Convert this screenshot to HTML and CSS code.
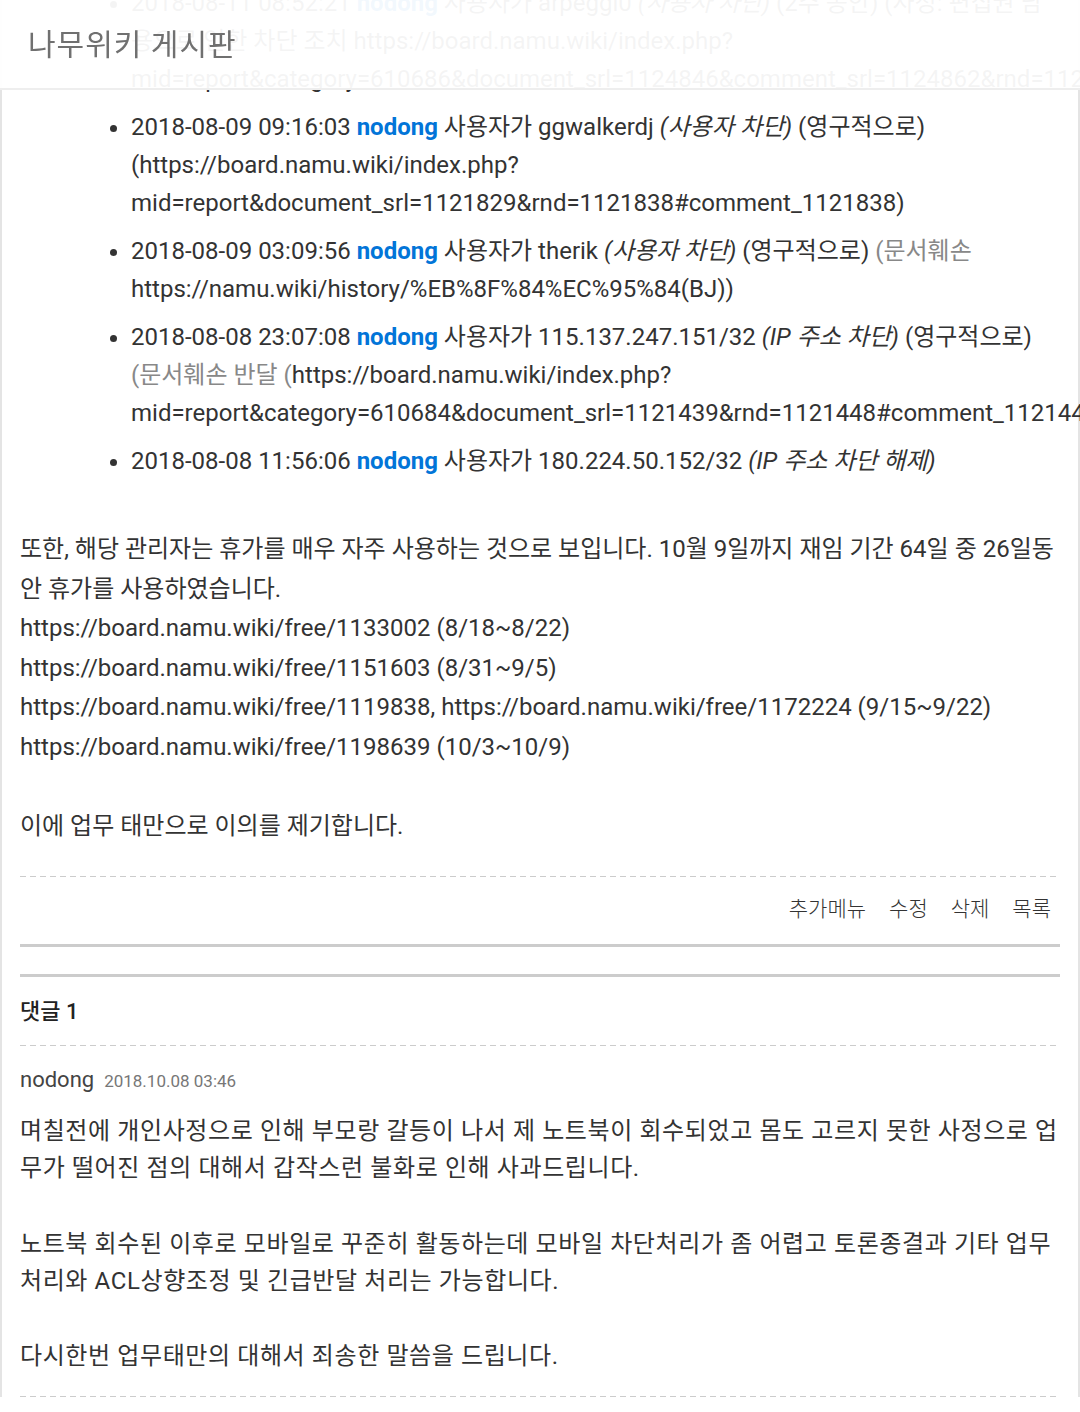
FILE: index.html
```html
<!DOCTYPE html>
<html lang="ko">
<head>
<meta charset="utf-8">
<title>나무위키 게시판</title>
<link rel="stylesheet" href="styles.css">
</head>
<body>
<header class="topbar">
  <h1 class="topbar-title">나무위키 게시판</h1>
</header>
<main class="board">
  <article class="post">
    <ul class="log">
      <li>2018-08-11 08:52:21 <span class="user">nodong</span> 사용자가 arpeggi0 <i>(사용자 차단)</i> (2주 동안) (사정: 편집권 남용으로 인한 차단 조치 https://board.namu.wiki/index.php?mid=report&amp;category=610686&amp;document_srl=1124846&amp;comment_srl=1124862&amp;rnd=1124862#comment_1124862)</li>
      <li>2018-08-09 09:16:03 <span class="user">nodong</span> 사용자가 ggwalkerdj <i>(사용자 차단)</i> (영구적으로) (https://board.namu.wiki/index.php?mid=report&amp;document_srl=1121829&amp;rnd=1121838#comment_1121838)</li>
      <li>2018-08-09 03:09:56 <span class="user">nodong</span> 사용자가 therik <i>(사용자 차단)</i> (영구적으로) <span class="reason">(문서훼손</span> https://namu.wiki/history/%EB%8F%84%EC%95%84(BJ))</li>
      <li>2018-08-08 23:07:08 <span class="user">nodong</span> 사용자가 115.137.247.151/32 <i>(IP 주소 차단)</i> (영구적으로) <span class="reason">(문서훼손 반달 (</span>https://board.namu.wiki/index.php?mid=report&amp;category=610684&amp;document_srl=1121439&amp;rnd=1121448#comment_1121448)</li>
      <li>2018-08-08 11:56:06 <span class="user">nodong</span> 사용자가 180.224.50.152/32 <i>(IP 주소 차단 해제)</i></li>
    </ul>
    <div class="post-text">
      <p>또한, 해당 관리자는 휴가를 매우 자주 사용하는 것으로 보입니다. 10월 9일까지 재임 기간 64일 중 26일동안 휴가를 사용하였습니다.<br>https://board.namu.wiki/free/1133002 (8/18~8/22)<br>https://board.namu.wiki/free/1151603 (8/31~9/5)<br>https://board.namu.wiki/free/1119838, https://board.namu.wiki/free/1172224 (9/15~9/22)<br>https://board.namu.wiki/free/1198639 (10/3~10/9)</p>
      <p>이에 업무 태만으로 이의를 제기합니다.</p>
    </div>
    <div class="dash"></div>
    <nav class="actions">
      <span class="action">추가메뉴</span>
      <span class="action">수정</span>
      <span class="action">삭제</span>
      <span class="action">목록</span>
    </nav>
  </article>
  <section class="comments">
    <h2 class="comments-title">댓글 1</h2>
    <div class="dash"></div>
    <div class="comment">
      <div class="comment-meta"><span class="comment-author">nodong</span><span class="comment-date">2018.10.08 03:46</span></div>
      <div class="comment-body">
        <p>며칠전에 개인사정으로 인해 부모랑 갈등이 나서 제 노트북이 회수되었고 몸도 고르지 못한 사정으로 업무가 떨어진 점의 대해서 갑작스런 불화로 인해 사과드립니다.</p>
        <p>노트북 회수된 이후로 모바일로 꾸준히 활동하는데 모바일 차단처리가 좀 어렵고 토론종결과 기타 업무처리와 ACL상향조정 및 긴급반달 처리는 가능합니다.</p>
        <p>다시한번 업무태만의 대해서 죄송한 말씀을 드립니다.</p>
      </div>
    </div>
    <div class="dash"></div>
  </section>
</main>
</body>
</html>
```

FILE: styles.css
```css
html {
  overflow: hidden;
}

body {
  margin: 0;
  background: #fff;
  color: #333;
  font-family: Roboto, "Noto Sans CJK KR", sans-serif;
  font-feature-settings: "palt" 1;
}

.topbar {
  position: fixed;
  top: 0;
  left: 0;
  right: 0;
  height: 90px;
  display: flex;
  align-items: center;
  padding-left: 28px;
  padding-bottom: 4px;
  box-sizing: border-box;
  background: rgba(255, 255, 255, 0.95);
  border-bottom: 2px solid #eeeeee;
  z-index: 10;
}

.topbar-title {
  margin: 0;
  font-size: 30px;
  font-weight: 400;
  color: #707070;
  letter-spacing: 1px;
}

.board {
  margin-top: -16px;
  padding: 0 18px;
  border-left: 2px solid #e4e4e4;
  border-right: 2px solid #e4e4e4;
}

.log {
  margin: 0 0 50px;
  padding-left: 111px;
  font-size: 24px;
  line-height: 38px;
}

.log li + li {
  margin-top: 10px;
}

.user {
  color: #0275d8;
  font-weight: 700;
}

.reason {
  color: #888;
}

.post-text {
  font-size: 24px;
  line-height: 39.6px;
  padding-bottom: 29px;
}

.post-text p {
  margin: 0;
}

.post-text p + p {
  margin-top: 39.6px;
}

.dash {
  height: 1px;
  background: repeating-linear-gradient(90deg, #cccccc 0 6px, transparent 6px 10px);
}

.actions {
  display: flex;
  justify-content: flex-end;
  gap: 23px;
  padding: 17px 9px 20px 0;
  font-size: 21px;
  line-height: 30px;
  font-weight: 300;
  color: #333;
  border-bottom: 3px solid #cccccc;
}

.comments {
  margin-top: 27px;
  border-top: 3px solid #cccccc;
}

.comments-title {
  margin: 0;
  padding: 20px 0 18px;
  font-size: 22px;
  line-height: 30px;
  font-weight: 500;
  color: #222;
}

.comment-meta {
  padding-top: 19px;
  line-height: 30px;
  display: flex;
  align-items: baseline;
}

.comment-author {
  font-size: 22px;
  color: #444;
}

.comment-date {
  margin-left: 10px;
  font-size: 17px;
  color: #777;
}

.comment-body {
  margin-top: 17px;
  padding-bottom: 20px;
  font-size: 24px;
  line-height: 37.6px;
  letter-spacing: 0.6px;
}

.comment-body p {
  margin: 0;
}

.comment-body p + p {
  margin-top: 37.6px;
}
```
